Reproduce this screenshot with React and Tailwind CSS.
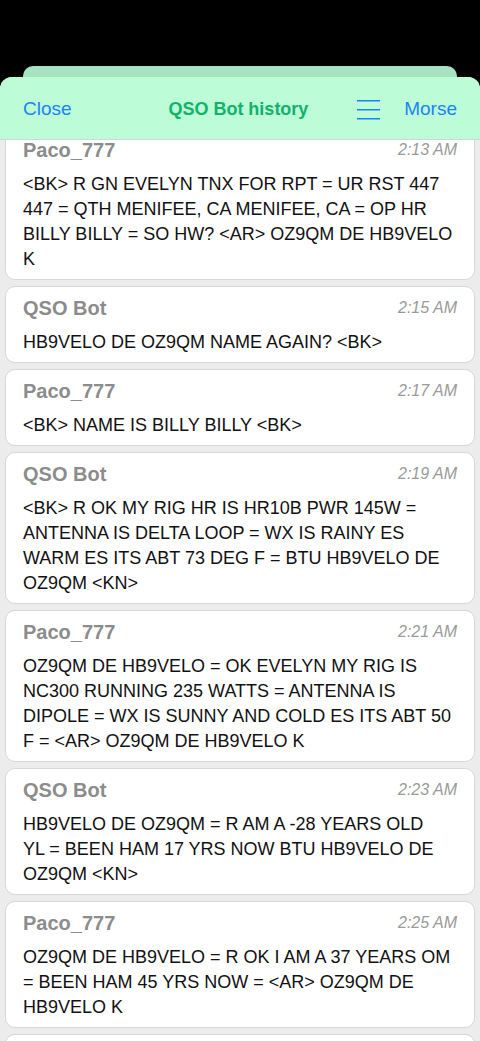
import React from "react";

const msgs = [
  { n: "Paco_777", t: "2:13 AM", b: ["<BK> R GN EVELYN TNX FOR RPT = UR RST 447", "447 = QTH MENIFEE, CA MENIFEE, CA = OP HR", "BILLY BILLY = SO HW? <AR> OZ9QM DE HB9VELO", "K"] },
  { n: "QSO Bot", t: "2:15 AM", b: ["HB9VELO DE OZ9QM NAME AGAIN? <BK>"] },
  { n: "Paco_777", t: "2:17 AM", b: ["<BK> NAME IS BILLY BILLY <BK>"] },
  { n: "QSO Bot", t: "2:19 AM", b: ["<BK> R OK MY RIG HR IS HR10B PWR 145W =", "ANTENNA IS DELTA LOOP = WX IS RAINY ES", "WARM ES ITS ABT 73 DEG F = BTU HB9VELO DE", "OZ9QM <KN>"] },
  { n: "Paco_777", t: "2:21 AM", b: ["OZ9QM DE HB9VELO = OK EVELYN MY RIG IS", "NC300 RUNNING 235 WATTS = ANTENNA IS", "DIPOLE = WX IS SUNNY AND COLD ES ITS ABT 50", "F = <AR> OZ9QM DE HB9VELO K"] },
  { n: "QSO Bot", t: "2:23 AM", b: ["HB9VELO DE OZ9QM = R AM A -28 YEARS OLD", "YL = BEEN HAM 17 YRS NOW BTU HB9VELO DE", "OZ9QM <KN>"] },
  { n: "Paco_777", t: "2:25 AM", b: ["OZ9QM DE HB9VELO = R OK I AM A 37 YEARS OM", "= BEEN HAM 45 YRS NOW = <AR> OZ9QM DE", "HB9VELO K"] },
  { n: "QSO Bot", t: "2:27 AM", b: ["HB9VELO DE OZ9QM = R OK TNX FER INFO <BK>"] },
];

export default function App() {
  return (
    <div
      className="w-[480px] h-[1041px] bg-black overflow-hidden flex flex-col"
      style={{ fontFamily: '"Liberation Sans", Arial, sans-serif' }}
    >
      <div className="h-[66px] shrink-0" />
      <div className="mx-[23px] h-[11px] shrink-0 rounded-t-[10px] bg-[#a7e3c3]" />
      <div className="flex-1 flex flex-col rounded-t-[12px] overflow-hidden bg-[#ececec]">
        <div className="h-[63px] shrink-0 bg-[#bcfcd6] border-b border-[#d0d8d3] flex items-center pt-[3px] px-[23px] relative z-10">
          <span className="text-[19px] text-[#1a84f7]">Close</span>
          <span className="flex-1 text-center text-[18px] font-bold text-[#12b26d] pl-[50px]">QSO Bot history</span>
          <svg width="23" height="22" viewBox="0 0 23 22" className="mr-[24px] ml-[2px]">
            <rect x="0" y="1" width="23" height="1.5" fill="#1a84f7" />
            <rect x="0" y="10" width="23" height="1.5" fill="#1a84f7" />
            <rect x="0" y="19" width="23" height="1.5" fill="#1a84f7" />
          </svg>
          <span className="text-[19px] text-[#1a84f7]">Morse</span>
        </div>
        <div className="flex-1 overflow-hidden">
          <div className="-mt-[12px] flex flex-col gap-[6px] px-[5px]">
            {msgs.map((m, i) => (
              <div key={i} className="bg-white border border-[#d7d7d7] rounded-[10px] px-[17px] pt-[9px] pb-[7px]">
                <div className="flex items-center justify-between h-[24px]">
                  <span className="text-[20px] font-bold text-[#8c8c8c]">{m.n}</span>
                  <span className="text-[16px] italic text-[#9a9a9a]">{m.t}</span>
                </div>
                <div className="mt-[10px] text-[18px] leading-[25px] text-[#111]">
                  {m.b.map((l, j) => (
                    <div key={j} className="whitespace-nowrap">{l}</div>
                  ))}
                </div>
              </div>
            ))}
          </div>
        </div>
      </div>
    </div>
  );
}
